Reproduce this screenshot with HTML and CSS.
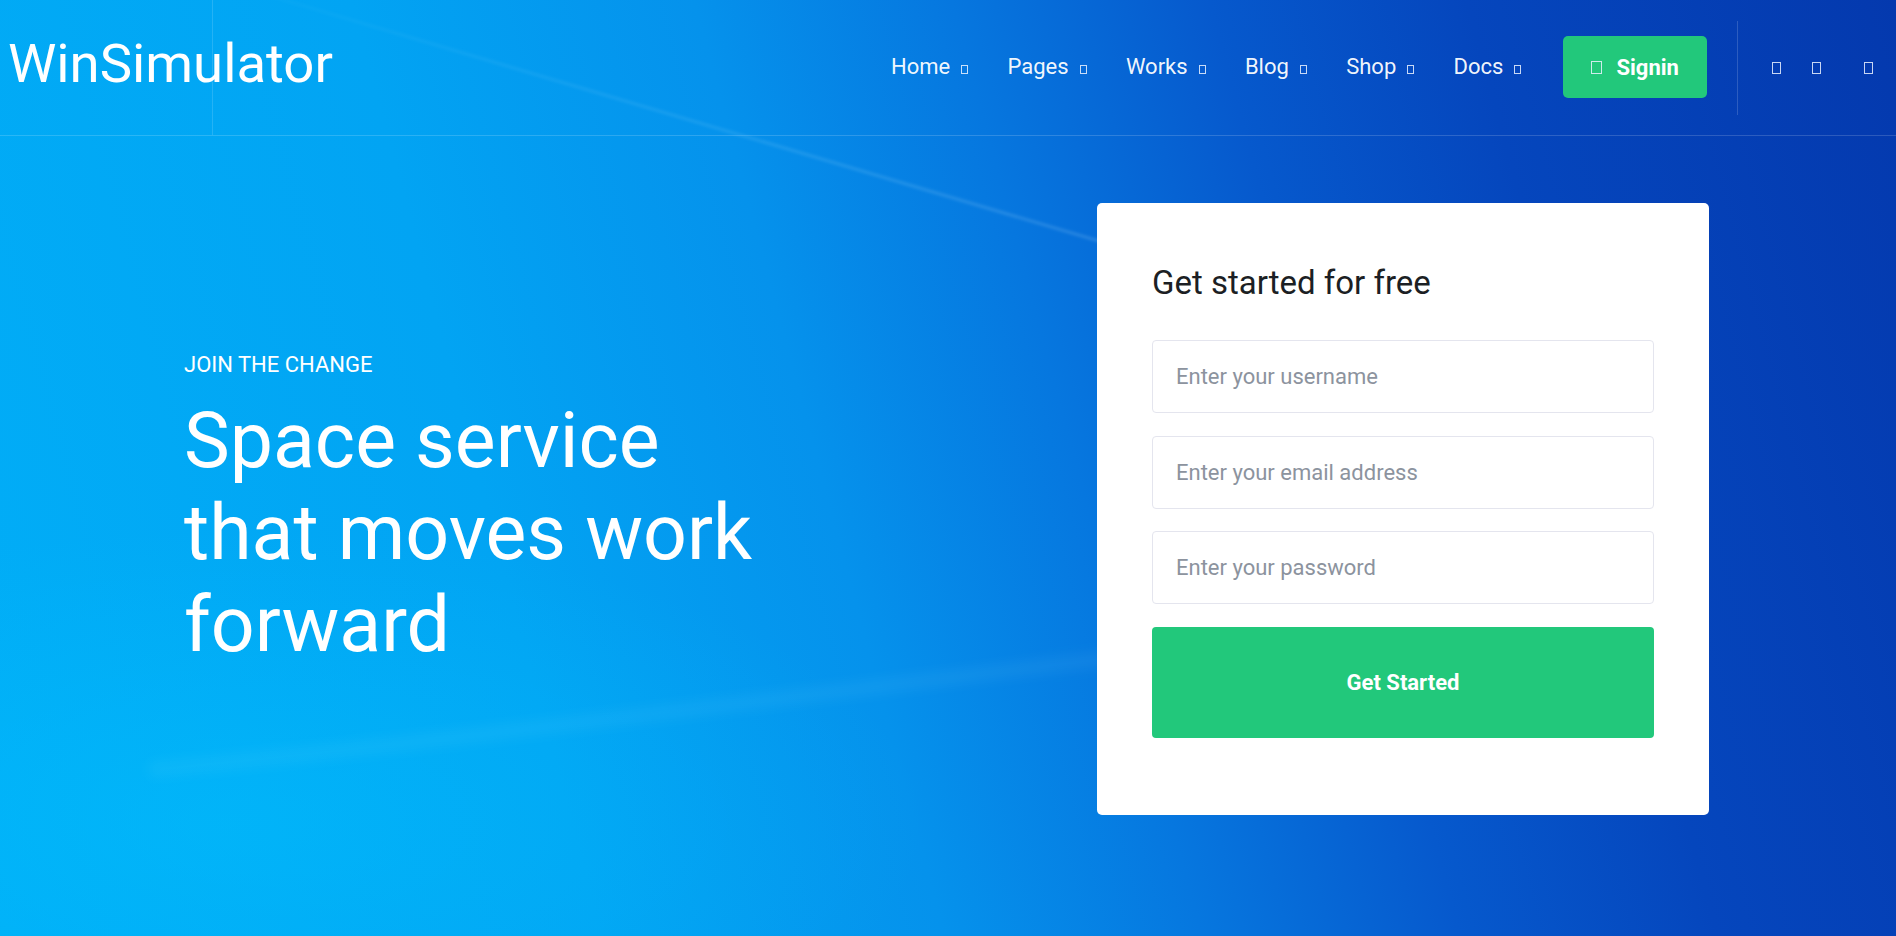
FILE: index.html
```html
<!DOCTYPE html>
<html lang="en">
<head>
<meta charset="utf-8">
<title>WinSimulator</title>
<link rel="stylesheet" href="styles.css">
</head>
<body>
<svg class="streaks" width="1896" height="936" viewBox="0 0 1896 936" aria-hidden="true">
  <defs>
    <filter id="soft" x="-10%" y="-50%" width="120%" height="200%"><feGaussianBlur stdDeviation="1.4"/></filter>
    <filter id="softer" x="-10%" y="-50%" width="120%" height="200%"><feGaussianBlur stdDeviation="6"/></filter>
    <linearGradient id="fadeA" x1="0" y1="0" x2="1" y2="0">
      <stop offset="0" stop-color="#bfeaff" stop-opacity="0.02"/>
      <stop offset="0.5" stop-color="#bfeaff" stop-opacity="0.12"/>
      <stop offset="1" stop-color="#bfeaff" stop-opacity="0.2"/>
    </linearGradient>
  </defs>
  <path d="M250 -10 C 480 60, 800 150, 1180 265" stroke="url(#fadeA)" stroke-width="3" fill="none" filter="url(#soft)"/>
  <path d="M150 770 C 420 745, 800 695, 1180 650" stroke="rgba(170,235,255,0.07)" stroke-width="14" fill="none" filter="url(#softer)"/>
</svg>

<header class="topbar">
  <div class="brand"><a class="logo" href="#">WinSimulator</a></div>
  <nav class="mainnav">
    <ul>
      <li><a href="#">Home</a><span class="tofu caret"></span></li>
      <li><a href="#">Pages</a><span class="tofu caret"></span></li>
      <li><a href="#">Works</a><span class="tofu caret"></span></li>
      <li><a href="#">Blog</a><span class="tofu caret"></span></li>
      <li><a href="#">Shop</a><span class="tofu caret"></span></li>
      <li><a href="#">Docs</a><span class="tofu caret"></span></li>
    </ul>
  </nav>
  <a class="signin" href="#"><span class="tofu btn-icon"></span><span>Signin</span></a>
  <div class="vdivider"></div>
  <div class="tools">
    <span class="tofu tool"></span>
    <span class="tofu tool"></span>
    <span class="tofu tool"></span>
  </div>
</header>

<main class="hero">
  <div class="hero-inner">
    <div class="hero-text">
      <p class="eyebrow">JOIN THE CHANGE</p>
      <h1 class="headline">Space service that moves work forward</h1>
    </div>
    <form class="signup-card">
      <h2 class="card-title">Get started for free</h2>
      <input class="field" type="text" placeholder="Enter your username">
      <input class="field" type="email" placeholder="Enter your email address">
      <input class="field" type="password" placeholder="Enter your password">
      <button class="submit" type="button">Get Started</button>
    </form>
  </div>
</main>
</body>
</html>
```

FILE: styles.css
```css
* { box-sizing: border-box; }

html, body {
  margin: 0;
  padding: 0;
  height: 936px;
  overflow: hidden;
}

body {
  position: relative;
  font-family: Roboto, "Liberation Sans", Arial, sans-serif;
  color: #ffffff;
  background:
    radial-gradient(ellipse 1000px 420px at 12% 88%, rgba(0, 200, 255, 0.35), rgba(0, 200, 255, 0) 70%),
    linear-gradient(75deg, #01aef7 0%, #02a4f3 28%, #0592ec 44%, #0677df 56%, #0659cd 68%, #0546bd 80%, #0439ae 100%);
}

.streaks {
  position: absolute;
  left: 0;
  top: 0;
  pointer-events: none;
  z-index: 0;
}

.topbar, .hero { position: relative; z-index: 1; }

/* ---------- header ---------- */
.topbar {
  display: flex;
  align-items: center;
  height: 136px;
  border-bottom: 1px solid rgba(255, 255, 255, 0.16);
}

.topbar > * { flex-shrink: 0; }

.brand {
  align-self: stretch;
  width: 213px;
  padding: 30px 0 0 8px;
  border-right: 1px solid rgba(255, 255, 255, 0.14);
}

.logo {
  display: block;
  font-size: 54.5px;
  line-height: 66px;
  font-weight: 400;
  color: #fff;
  text-decoration: none;
  white-space: nowrap;
}

.mainnav { margin-left: 678px; margin-bottom: 2px; }

.mainnav ul {
  display: flex;
  list-style: none;
  margin: 0;
  padding: 0;
}

.mainnav li {
  display: flex;
  align-items: baseline;
  margin-right: 39.3px;
}

.mainnav a {
  color: rgba(255, 255, 255, 0.96);
  font-size: 22px;
  line-height: 30px;
  text-decoration: none;
}

.tofu {
  display: inline-block;
  border: 1px solid rgba(235, 242, 255, 0.85);
}

.caret {
  width: 7px;
  height: 9px;
  margin-left: 11px;
}

.signin {
  display: flex;
  align-items: center;
  justify-content: center;
  gap: 15px;
  width: 144px;
  height: 62px;
  margin-left: 2px;
  margin-bottom: 1px;
  border-radius: 5px;
  background: #22c87b;
  color: #fff;
  font-size: 22px;
  font-weight: 700;
  text-decoration: none;
}

.btn-icon {
  width: 11px;
  height: 13px;
  margin-top: 1px;
}

.vdivider {
  width: 1px;
  height: 94px;
  margin-left: 30px;
  background: rgba(255, 255, 255, 0.16);
}

.tools {
  display: flex;
  align-items: center;
  margin-left: 34px;
}

.tool {
  width: 9px;
  height: 12px;
  margin-right: 31px;
}

.tool:nth-child(2) { margin-right: 43px; }
.tool:last-child { margin-right: 0; }

/* ---------- hero ---------- */
.hero {
  padding-top: 67px;
}

.hero-inner {
  display: flex;
  align-items: center;
  justify-content: space-between;
  width: 1525px;
  margin-left: 184px;
}

.hero-text {
  width: 600px;
  margin-top: 2px;
}

.eyebrow {
  margin: 0 0 14px;
  font-size: 22px;
  line-height: 33px;
  font-weight: 400;
  text-transform: uppercase;
}

.headline {
  margin: 0;
  font-size: 77px;
  line-height: 92px;
  font-weight: 400;
}

.signup-card {
  width: 612px;
  padding: 59px 55px 77px;
  background: #ffffff;
  border-radius: 5px;
  display: flex;
  flex-direction: column;
}

.card-title {
  margin: 0 0 37px;
  font-size: 33px;
  line-height: 41px;
  font-weight: 400;
  color: #1c1f24;
}

.field {
  display: block;
  width: 100%;
  height: 73px;
  margin: 0 0 22.5px;
  padding: 0 23px;
  border: 1px solid #e4e5ee;
  border-radius: 4px;
  background: #fff;
  font-family: inherit;
  font-size: 22px;
  color: #333;
  outline: none;
}

.field::placeholder { color: #8c939e; }

.submit {
  display: block;
  width: 100%;
  height: 111px;
  border: 0;
  border-radius: 4px;
  background: #22c87b;
  color: #fff;
  font-family: inherit;
  font-size: 22px;
  font-weight: 700;
  cursor: pointer;
}
```
